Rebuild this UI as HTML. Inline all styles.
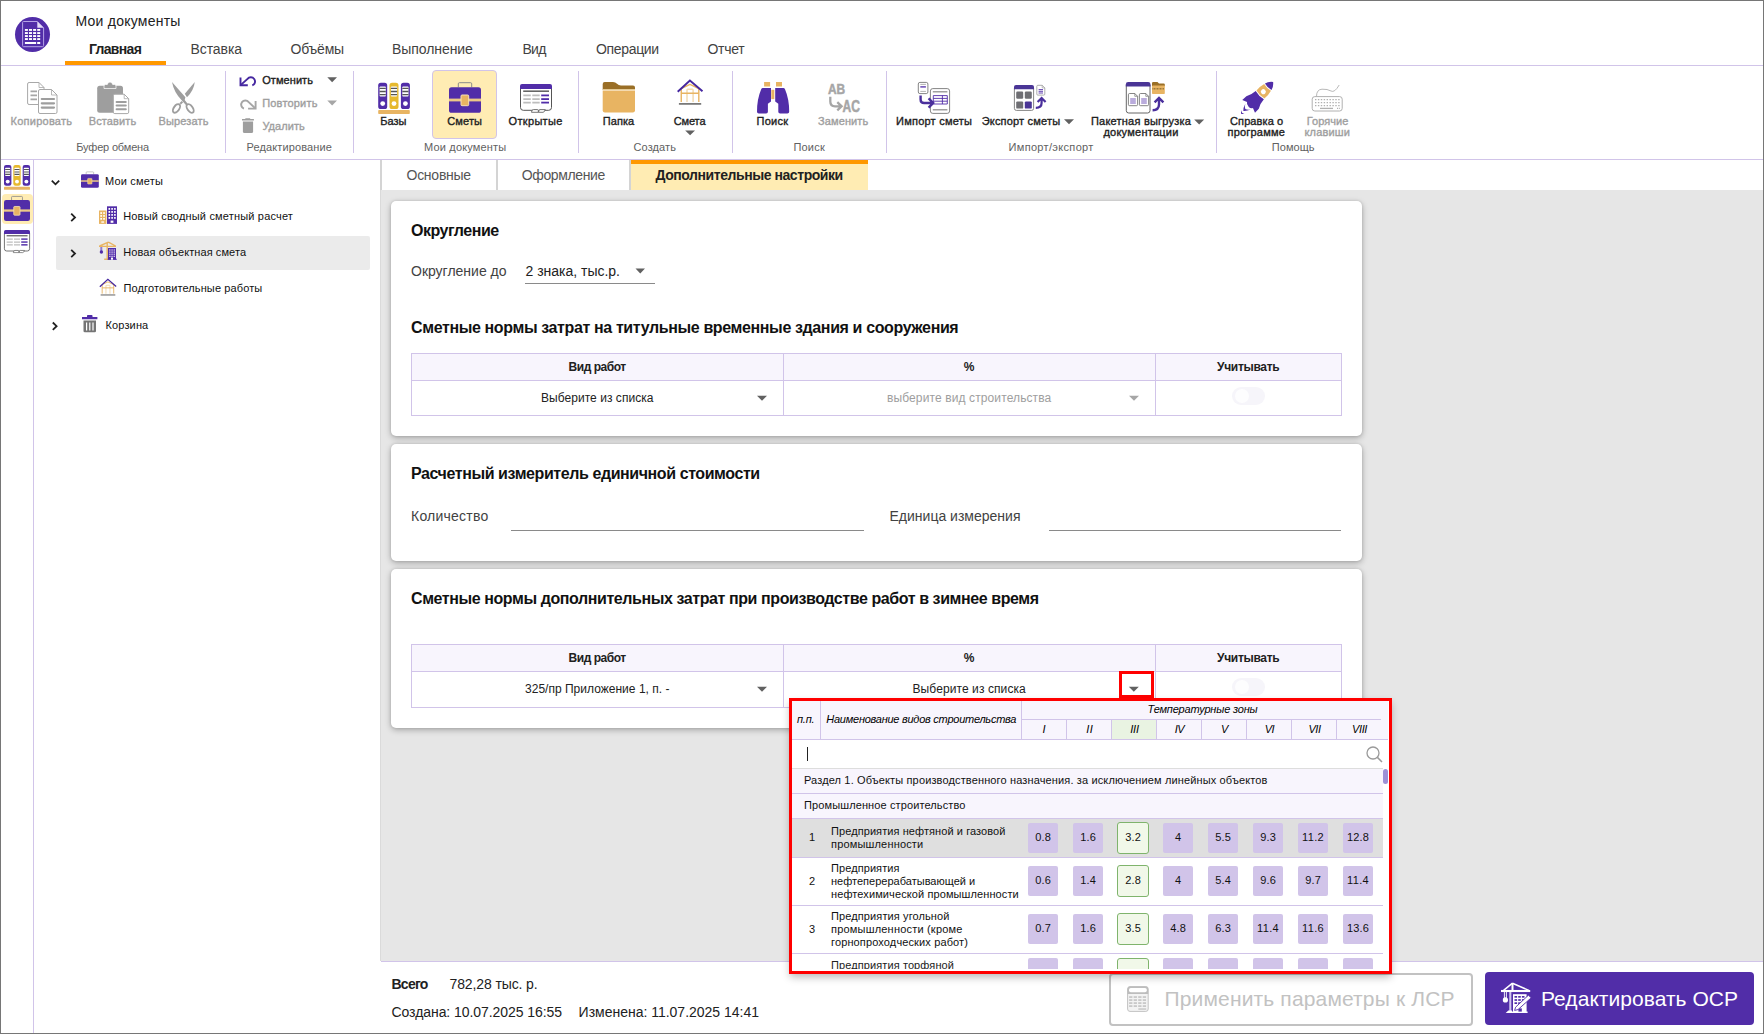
<!DOCTYPE html><html lang="ru"><head><meta charset="utf-8"><title>Мои документы</title><style>
html,body{margin:0;padding:0;background:#fff;}body{width:1764px;height:1034px;position:relative;overflow:hidden;font-family:'Liberation Sans', sans-serif;}
.t{position:absolute;white-space:nowrap;font-family:'Liberation Sans', sans-serif;}
svg{position:absolute;left:0;top:0;overflow:visible}

</style></head><body>
<div style="position:absolute;left:381px;top:190px;width:1382px;height:771px;background:#e6e6e6;"></div>
<div style="position:absolute;left:1px;top:65px;width:1762px;height:1px;background:#d1c4e9;"></div>
<div style="position:absolute;left:65px;top:61px;width:101px;height:4px;background:#ff9800;"></div>
<div style="position:absolute;left:1px;top:159px;width:1762px;height:1px;background:#d1c4e9;"></div>
<div style="position:absolute;left:225px;top:71px;width:1px;height:82px;background:#d1c4e9;"></div>
<div style="position:absolute;left:353px;top:71px;width:1px;height:82px;background:#d1c4e9;"></div>
<div style="position:absolute;left:578px;top:71px;width:1px;height:82px;background:#d1c4e9;"></div>
<div style="position:absolute;left:732px;top:71px;width:1px;height:82px;background:#d1c4e9;"></div>
<div style="position:absolute;left:886px;top:71px;width:1px;height:82px;background:#d1c4e9;"></div>
<div style="position:absolute;left:1216px;top:71px;width:1px;height:82px;background:#d1c4e9;"></div>
<div style="position:absolute;left:33px;top:160px;width:1px;height:873px;background:#d1c4e9;"></div>
<div style="position:absolute;left:432px;top:70px;width:63px;height:67px;background:#ffecb3;border:1px solid #d1c4e9;border-radius:4px;"></div>
<div style="position:absolute;left:2px;top:194px;width:31px;height:30px;background:#ffecb3;border-radius:4px;"></div>
<div style="position:absolute;left:56px;top:236px;width:314px;height:34px;background:#ebebeb;border-radius:2px;"></div>
<div style="position:absolute;left:381px;top:160px;width:1382px;height:30px;background:#fff;"></div>
<div style="position:absolute;left:380px;top:160px;width:2px;height:30px;background:#d4d4d4;"></div>
<div style="position:absolute;left:380px;top:190px;width:1px;height:771px;background:#dadada;"></div>
<div style="position:absolute;left:496px;top:160px;width:2px;height:30px;background:#d4d4d4;"></div>
<div style="position:absolute;left:629px;top:160px;width:2px;height:30px;background:#d4d4d4;"></div>
<div style="position:absolute;left:631px;top:160px;width:237px;height:30px;background:#ffecb3;"></div>
<div style="position:absolute;left:631px;top:160px;width:237px;height:4px;background:#ff9800;"></div>
<div style="position:absolute;left:391px;top:201px;width:971px;height:235px;background:#fff;border-radius:5px;box-shadow:0 2px 6px rgba(0,0,0,.28),0 0 3px rgba(0,0,0,.12);"></div>
<div style="position:absolute;left:391px;top:444px;width:971px;height:117px;background:#fff;border-radius:5px;box-shadow:0 2px 6px rgba(0,0,0,.28),0 0 3px rgba(0,0,0,.12);"></div>
<div style="position:absolute;left:391px;top:569px;width:971px;height:159px;background:#fff;border-radius:5px;box-shadow:0 2px 6px rgba(0,0,0,.28),0 0 3px rgba(0,0,0,.12);"></div>
<div style="position:absolute;left:381px;top:961px;width:1382px;height:72px;background:#fff;border-top:1px solid #d1c4e9;"></div>
<div style="position:absolute;left:525px;top:283px;width:130px;height:1px;background:#8a8a8a;"></div>
<div style="position:absolute;left:411px;top:353px;width:931px;height:63px;border:1px solid #d1c4e9;box-sizing:border-box;background:#fff;"></div>
<div style="position:absolute;left:412px;top:354px;width:929px;height:26px;background:#f8f5fd;"></div>
<div style="position:absolute;left:412px;top:380px;width:929px;height:1px;background:#d1c4e9;"></div>
<div style="position:absolute;left:783px;top:354px;width:1px;height:61px;background:#d1c4e9;"></div>
<div style="position:absolute;left:1155px;top:354px;width:1px;height:61px;background:#d1c4e9;"></div>
<div style="position:absolute;left:1232px;top:387px;width:33px;height:18px;background:#f6f5fa;border-radius:9px;"></div>
<div style="position:absolute;left:1235px;top:389px;width:14px;height:14px;background:#fdfdfe;border-radius:7px;"></div>
<div style="position:absolute;left:511px;top:530px;width:353px;height:1px;background:#8a8a8a;"></div>
<div style="position:absolute;left:1049px;top:530px;width:292px;height:1px;background:#8a8a8a;"></div>
<div style="position:absolute;left:411px;top:644px;width:931px;height:64px;border:1px solid #d1c4e9;box-sizing:border-box;background:#fff;"></div>
<div style="position:absolute;left:412px;top:645px;width:929px;height:26px;background:#f8f5fd;"></div>
<div style="position:absolute;left:412px;top:671px;width:929px;height:1px;background:#d1c4e9;"></div>
<div style="position:absolute;left:783px;top:645px;width:1px;height:62px;background:#d1c4e9;"></div>
<div style="position:absolute;left:1155px;top:645px;width:1px;height:62px;background:#d1c4e9;"></div>
<div style="position:absolute;left:1232px;top:678px;width:33px;height:18px;background:#f6f5fa;border-radius:9px;"></div>
<div style="position:absolute;left:1235px;top:680px;width:14px;height:14px;background:#fdfdfe;border-radius:7px;"></div>
<div style="position:absolute;left:1119px;top:671px;width:29px;height:21px;border:3px solid #ff0000;"></div>
<div style="position:absolute;left:1109px;top:973px;width:360px;height:49px;border:2px solid #c2c2c2;border-radius:4px;background:#fff;"></div>
<div style="position:absolute;left:1485px;top:972px;width:269px;height:53px;background:#512da8;border-radius:4px;"></div>
<div style="position:absolute;left:789px;top:698px;width:597px;height:270px;border:3px solid #ff0000;background:#fff;box-shadow:0 4px 8px -1px rgba(0,0,0,.28);z-index:20;"></div>
<div style="position:absolute;left:792px;top:701px;width:596px;height:38px;background:#f8f5fd;z-index:20;"></div>
<div style="position:absolute;left:792px;top:739px;width:596px;height:1px;background:#d1c4e9;z-index:20;"></div>
<div style="position:absolute;left:820px;top:701px;width:1px;height:38px;background:#d1c4e9;z-index:20;"></div>
<div style="position:absolute;left:1021px;top:701px;width:1px;height:38px;background:#d1c4e9;z-index:20;"></div>
<div style="position:absolute;left:1021px;top:719px;width:360px;height:1px;background:#d1c4e9;z-index:20;"></div>
<div style="position:absolute;left:1066px;top:720px;width:1px;height:19px;background:#d1c4e9;z-index:20;"></div>
<div style="position:absolute;left:1111px;top:720px;width:1px;height:19px;background:#d1c4e9;z-index:20;"></div>
<div style="position:absolute;left:1156px;top:720px;width:1px;height:19px;background:#d1c4e9;z-index:20;"></div>
<div style="position:absolute;left:1201px;top:720px;width:1px;height:19px;background:#d1c4e9;z-index:20;"></div>
<div style="position:absolute;left:1246px;top:720px;width:1px;height:19px;background:#d1c4e9;z-index:20;"></div>
<div style="position:absolute;left:1291px;top:720px;width:1px;height:19px;background:#d1c4e9;z-index:20;"></div>
<div style="position:absolute;left:1336px;top:720px;width:1px;height:19px;background:#d1c4e9;z-index:20;"></div>
<div style="position:absolute;left:1112px;top:720px;width:44px;height:19px;background:#e9f3e2;z-index:20;"></div>
<div style="position:absolute;left:807px;top:747px;width:1px;height:14px;background:#222;z-index:20;"></div>
<div style="position:absolute;left:792px;top:768px;width:591px;height:1px;background:#ddd;z-index:20;"></div>
<div style="position:absolute;left:792px;top:769px;width:591px;height:24px;background:#f8f5fd;z-index:20;"></div>
<div style="position:absolute;left:792px;top:793px;width:591px;height:1px;background:#d1c4e9;z-index:20;"></div>
<div style="position:absolute;left:792px;top:794px;width:591px;height:24px;background:#f8f5fd;z-index:20;"></div>
<div style="position:absolute;left:792px;top:818px;width:591px;height:1px;background:#d1c4e9;z-index:20;"></div>
<div style="position:absolute;left:1383px;top:769px;width:5px;height:15px;background:#9d90d6;border-radius:2.5px;z-index:20;"></div>
<div style="position:absolute;left:792px;top:819px;width:591px;height:38px;background:#dfdfdf;z-index:20;"></div>
<div style="position:absolute;left:792px;top:857px;width:591px;height:1px;background:#d1c4e9;z-index:20;"></div>
<div style="position:absolute;left:792px;top:905px;width:591px;height:1px;background:#d1c4e9;z-index:20;"></div>
<div style="position:absolute;left:792px;top:953px;width:591px;height:1px;background:#d1c4e9;z-index:20;"></div>
<div style="position:absolute;left:1028.0px;top:823px;width:30px;height:30px;background:#d1c4e9;border-radius:2px;z-index:20;"></div>
<div style="position:absolute;left:1073.0px;top:823px;width:30px;height:30px;background:#d1c4e9;border-radius:2px;z-index:20;"></div>
<div style="position:absolute;left:1117.0px;top:822px;width:30px;height:30px;background:#f1f8e9;border:1px solid #7fb46c;border-radius:3px;z-index:20;"></div>
<div style="position:absolute;left:1163.0px;top:823px;width:30px;height:30px;background:#d1c4e9;border-radius:2px;z-index:20;"></div>
<div style="position:absolute;left:1208.0px;top:823px;width:30px;height:30px;background:#d1c4e9;border-radius:2px;z-index:20;"></div>
<div style="position:absolute;left:1253.0px;top:823px;width:30px;height:30px;background:#d1c4e9;border-radius:2px;z-index:20;"></div>
<div style="position:absolute;left:1298.0px;top:823px;width:30px;height:30px;background:#d1c4e9;border-radius:2px;z-index:20;"></div>
<div style="position:absolute;left:1343.0px;top:823px;width:30px;height:30px;background:#d1c4e9;border-radius:2px;z-index:20;"></div>
<div style="position:absolute;left:1028.0px;top:866px;width:30px;height:30px;background:#d1c4e9;border-radius:2px;z-index:20;"></div>
<div style="position:absolute;left:1073.0px;top:866px;width:30px;height:30px;background:#d1c4e9;border-radius:2px;z-index:20;"></div>
<div style="position:absolute;left:1117.0px;top:865px;width:30px;height:30px;background:#f1f8e9;border:1px solid #7fb46c;border-radius:3px;z-index:20;"></div>
<div style="position:absolute;left:1163.0px;top:866px;width:30px;height:30px;background:#d1c4e9;border-radius:2px;z-index:20;"></div>
<div style="position:absolute;left:1208.0px;top:866px;width:30px;height:30px;background:#d1c4e9;border-radius:2px;z-index:20;"></div>
<div style="position:absolute;left:1253.0px;top:866px;width:30px;height:30px;background:#d1c4e9;border-radius:2px;z-index:20;"></div>
<div style="position:absolute;left:1298.0px;top:866px;width:30px;height:30px;background:#d1c4e9;border-radius:2px;z-index:20;"></div>
<div style="position:absolute;left:1343.0px;top:866px;width:30px;height:30px;background:#d1c4e9;border-radius:2px;z-index:20;"></div>
<div style="position:absolute;left:1028.0px;top:914px;width:30px;height:30px;background:#d1c4e9;border-radius:2px;z-index:20;"></div>
<div style="position:absolute;left:1073.0px;top:914px;width:30px;height:30px;background:#d1c4e9;border-radius:2px;z-index:20;"></div>
<div style="position:absolute;left:1117.0px;top:913px;width:30px;height:30px;background:#f1f8e9;border:1px solid #7fb46c;border-radius:3px;z-index:20;"></div>
<div style="position:absolute;left:1163.0px;top:914px;width:30px;height:30px;background:#d1c4e9;border-radius:2px;z-index:20;"></div>
<div style="position:absolute;left:1208.0px;top:914px;width:30px;height:30px;background:#d1c4e9;border-radius:2px;z-index:20;"></div>
<div style="position:absolute;left:1253.0px;top:914px;width:30px;height:30px;background:#d1c4e9;border-radius:2px;z-index:20;"></div>
<div style="position:absolute;left:1298.0px;top:914px;width:30px;height:30px;background:#d1c4e9;border-radius:2px;z-index:20;"></div>
<div style="position:absolute;left:1343.0px;top:914px;width:30px;height:30px;background:#d1c4e9;border-radius:2px;z-index:20;"></div>
<div style="position:absolute;left:792px;top:954px;width:591px;height:15px;overflow:hidden;z-index:21;font-family:'Liberation Sans', sans-serif;font-size:11px;line-height:13px;color:#212121"><div style="position:absolute;left:17px;top:14px;">4</div><div style="position:absolute;left:39px;top:5px;white-space:nowrap;letter-spacing:0.1px">Предприятия торфяной</div><div style="position:absolute;left:236.0px;top:4px;width:30px;height:30px;line-height:30px;text-align:center;background:#d1c4e9;border-radius:2px;">0.8</div><div style="position:absolute;left:281.0px;top:4px;width:30px;height:30px;line-height:30px;text-align:center;background:#d1c4e9;border-radius:2px;">1.7</div><div style="position:absolute;left:325.0px;top:4px;width:30px;height:30px;line-height:30px;text-align:center;background:#f1f8e9;border:1px solid #7fb46c;border-radius:3px;">3.7</div><div style="position:absolute;left:371.0px;top:4px;width:30px;height:30px;line-height:30px;text-align:center;background:#d1c4e9;border-radius:2px;">5.1</div><div style="position:absolute;left:416.0px;top:4px;width:30px;height:30px;line-height:30px;text-align:center;background:#d1c4e9;border-radius:2px;">4.6</div><div style="position:absolute;left:461.0px;top:4px;width:30px;height:30px;line-height:30px;text-align:center;background:#d1c4e9;border-radius:2px;">7.1</div><div style="position:absolute;left:506.0px;top:4px;width:30px;height:30px;line-height:30px;text-align:center;background:#d1c4e9;border-radius:2px;">9.6</div><div style="position:absolute;left:551.0px;top:4px;width:30px;height:30px;line-height:30px;text-align:center;background:#d1c4e9;border-radius:2px;">9.9</div></div>
<div style="position:absolute;left:0;top:0;width:1762px;height:1032px;border:1px solid #767676;z-index:99;pointer-events:none"></div>
<svg width="1764" height="1034" viewBox="0 0 1764 1034"><circle cx="32.5" cy="34.5" r="17.5" fill="#512da8"/>
<path d="M23.5 21.5H37.3L43.6 27.8V45.5Q43.6 46.7 42.4 46.7H23.5Q22.6 46.7 22.6 45.5V22.5Q22.6 21.5 23.5 21.5Z" fill="none" stroke="#b6a4e6" stroke-width="1"/>
<path d="M37.3 21.6V27.8H43.5Z" fill="#e4dcf8"/>
<g fill="#fff"><rect x="24.9" y="29" width="3" height="1.9"/><rect x="24.9" y="32.1" width="3" height="1.9"/><rect x="24.9" y="35.1" width="3" height="1.9"/><rect x="24.9" y="38.1" width="3" height="1.9"/><rect x="29" y="29" width="3" height="1.9"/><rect x="29" y="32.1" width="3" height="1.9"/><rect x="29" y="35.1" width="3" height="1.9"/><rect x="29" y="38.1" width="3" height="1.9"/><rect x="33.1" y="29" width="3" height="1.9"/><rect x="33.1" y="32.1" width="3" height="1.9"/><rect x="33.1" y="35.1" width="3" height="1.9"/><rect x="33.1" y="38.1" width="3" height="1.9"/><rect x="37.2" y="29" width="3" height="1.9"/><rect x="37.2" y="32.1" width="3" height="1.9"/><rect x="37.2" y="35.1" width="3" height="1.9"/><rect x="37.2" y="38.1" width="3" height="1.9"/><rect x="24.9" y="42" width="11.2" height="2"/><rect x="37.2" y="42" width="3" height="2"/></g>
<path d="M29.1 82.5H39.0L44.0 87.5V103.0Q44.0 104.5 42.5 104.5H29.1Q27.6 104.5 27.6 103.0V84.0Q27.6 82.5 29.1 82.5Z" fill="#fff" stroke="#a8a8a8" stroke-width="1"/><path d="M39.0 82.5V87.5H44.0" fill="none" stroke="#a8a8a8" stroke-width="0.8"/>
<path d="M30.5 91.3H37M30.5 95.3H37M30.5 99.3H37" stroke="#a6a6a6" stroke-width="1.8"/>
<path d="M40.0 89.5H51.5L57.0 95.0V112.0Q57.0 113.5 55.5 113.5H40.0Q38.5 113.5 38.5 112.0V91.0Q38.5 89.5 40.0 89.5Z" fill="#fff" stroke="#a8a8a8" stroke-width="1"/><path d="M51.5 89.5V95.0H57.0" fill="none" stroke="#a8a8a8" stroke-width="0.8"/>
<path d="M41.8 99H54M41.8 103.3H54M41.8 107.6H54" stroke="#9e9e9e" stroke-width="2.2" stroke-linecap="round"/>
<rect x="97.2" y="85.8" width="25.8" height="27" rx="2.5" fill="#9e9e9e"/>
<path d="M104 88.5V86Q104 84.5 105.5 84.5H107.3Q107.8 82 110 82Q112.2 82 112.7 84.5H114.5Q116 84.5 116 86V88.5Z" fill="#9e9e9e" stroke="#fff" stroke-width="0.7"/>
<path d="M114.8 94.2H124.19999999999999L128.7 98.7V112.1Q128.7 113.6 127.19999999999999 113.6H114.8Q113.3 113.6 113.3 112.1V95.7Q113.3 94.2 114.8 94.2Z" fill="#fff" stroke="#a8a8a8" stroke-width="1"/><path d="M124.19999999999999 94.2V98.7H128.7" fill="none" stroke="#a8a8a8" stroke-width="0.8"/>
<path d="M116.6 102H125.8M116.6 105.6H125.8M116.6 109.2H125.8" stroke="#9e9e9e" stroke-width="2" stroke-linecap="round"/>
<path d="M172 82.1L185.4 97.2L184.7 100.1L188 104.2L186.3 105.5L181.9 100.6Q174 92.8 172 82.1Z" fill="#9e9e9e"/>
<path d="M194.8 82.1L184.8 93.8L187 97.3Q193.8 90.6 194.8 82.1Z" fill="#9e9e9e"/>
<path d="M182.4 101.6L180.3 103.8" stroke="#9e9e9e" stroke-width="2"/>
<ellipse cx="176.5" cy="108.4" rx="2.7" ry="4.9" transform="rotate(35 176.5 108.4)" fill="none" stroke="#9e9e9e" stroke-width="1.9"/>
<ellipse cx="190.1" cy="108.5" rx="2.7" ry="4.9" transform="rotate(-35 190.1 108.5)" fill="none" stroke="#9e9e9e" stroke-width="1.9"/>
<g fill="none" stroke="#4527a0" stroke-width="1.9"><path d="M240.5 77.6V85.3H247.8"/><path d="M240.9 84.9L247.5 78.9A4.2 4.2 0 1 1 252.3 85.4"/></g>
<g fill="none" stroke="#a6a6a6" stroke-width="1.9"><path d="M255.6 100.9V108.6H248.1"/><path d="M255.2 108.2L248.7 102.1A4.2 4.2 0 1 0 243.9 108.6"/></g>
<path d="M245.2 119.1V118.7Q245.2 118.2 245.7 118.2H249.8Q250.3 118.2 250.3 118.7V119.1H253.9V120.5H242V119.1Z" fill="#9e9e9e"/><path d="M242.9 121.4H253.1V131.4Q253.1 132.9 251.6 132.9H244.4Q242.9 132.9 242.9 131.4Z" fill="#9e9e9e"/>
<path d="M327.3 77.3H337L332.15 82.3Z" fill="#616161"/>
<path d="M327.3 100.4H337L332.15 105.4Z" fill="#a6a6a6"/>
<path d="M685.2 130.5H695L690.1 135.3Z" fill="#616161"/>
<path d="M1064 119.2H1074L1069.0 124.2Z" fill="#616161"/>
<path d="M1194.2 119.5H1204.2L1199.2 124.5Z" fill="#616161"/>
<path d="M635.5 268.6H645L640.25 273.6Z" fill="#616161"/>
<path d="M757 395.8H767L762.0 400.8Z" fill="#616161"/>
<path d="M1129 395.8H1139L1134.0 400.8Z" fill="#a6a6a6"/>
<path d="M757 686.8H767L762.0 691.8Z" fill="#616161"/>
<g transform="translate(378.2 82.8) scale(1 1)"><rect x="0" y="0" width="9" height="26.2" rx="2.6" fill="#512da8"/><rect x="1.4" y="3.6" width="6.2" height="10.2" rx="0.8" fill="#fff"/><path d="M1.4 5.6h6.2M1.4 8.7h6.2M1.4 11.8h6.2" stroke="#555" stroke-width="1.3"/><circle cx="4.5" cy="20.8" r="2.4" fill="#fff"/><rect x="11.3" y="0" width="9" height="26.2" rx="2.6" fill="#e6b92e"/><rect x="12.700000000000001" y="3.6" width="6.2" height="10.2" rx="0.8" fill="#fff"/><path d="M12.700000000000001 5.6h6.2M12.700000000000001 8.7h6.2M12.700000000000001 11.8h6.2" stroke="#555" stroke-width="1.3"/><circle cx="15.8" cy="20.8" r="2.4" fill="#fff"/><rect x="22.7" y="0" width="9" height="26.2" rx="2.6" fill="#512da8"/><rect x="24.099999999999998" y="3.6" width="6.2" height="10.2" rx="0.8" fill="#fff"/><path d="M24.099999999999998 5.6h6.2M24.099999999999998 8.7h6.2M24.099999999999998 11.8h6.2" stroke="#555" stroke-width="1.3"/><circle cx="27.2" cy="20.8" r="2.4" fill="#fff"/><rect x="0" y="27.3" width="31.6" height="3.9" rx="0.8" fill="#e8b462"/></g>
<g transform="translate(4 165) scale(0.8227848101265822 0.7948717948717949)"><rect x="0" y="0" width="9" height="26.2" rx="2.6" fill="#512da8"/><rect x="1.4" y="3.6" width="6.2" height="10.2" rx="0.8" fill="#fff"/><path d="M1.4 5.6h6.2M1.4 8.7h6.2M1.4 11.8h6.2" stroke="#555" stroke-width="1.3"/><circle cx="4.5" cy="20.8" r="2.4" fill="#fff"/><rect x="11.3" y="0" width="9" height="26.2" rx="2.6" fill="#e6b92e"/><rect x="12.700000000000001" y="3.6" width="6.2" height="10.2" rx="0.8" fill="#fff"/><path d="M12.700000000000001 5.6h6.2M12.700000000000001 8.7h6.2M12.700000000000001 11.8h6.2" stroke="#555" stroke-width="1.3"/><circle cx="15.8" cy="20.8" r="2.4" fill="#fff"/><rect x="22.7" y="0" width="9" height="26.2" rx="2.6" fill="#512da8"/><rect x="24.099999999999998" y="3.6" width="6.2" height="10.2" rx="0.8" fill="#fff"/><path d="M24.099999999999998 5.6h6.2M24.099999999999998 8.7h6.2M24.099999999999998 11.8h6.2" stroke="#555" stroke-width="1.3"/><circle cx="27.2" cy="20.8" r="2.4" fill="#fff"/><rect x="0" y="27.3" width="31.6" height="3.9" rx="0.8" fill="#e8b462"/></g>
<g transform="translate(449 82.2) scale(1 1)"><path d="M9.3 5V1.6Q9.3 0.5 10.4 0.5H21.6Q22.7 0.5 22.7 1.6V5" fill="none" stroke="#8a8a8a" stroke-width="1"/><rect x="0" y="5" width="32" height="25.6" rx="2.6" fill="#512da8"/><rect x="0" y="16.4" width="32" height="2.8" fill="#ecc987"/><rect x="12" y="12.8" width="7.7" height="10.7" rx="1" fill="#e8b462" stroke="#f5e0b5" stroke-width="1"/></g>
<g transform="translate(4 196) scale(0.8125 0.8169934640522876)"><path d="M9.3 5V1.6Q9.3 0.5 10.4 0.5H21.6Q22.7 0.5 22.7 1.6V5" fill="none" stroke="#8a8a8a" stroke-width="1"/><rect x="0" y="5" width="32" height="25.6" rx="2.6" fill="#512da8"/><rect x="0" y="16.4" width="32" height="2.8" fill="#ecc987"/><rect x="12" y="12.8" width="7.7" height="10.7" rx="1" fill="#e8b462" stroke="#f5e0b5" stroke-width="1"/></g>
<g transform="translate(81 171.6) scale(0.55625 0.5294117647058824)"><path d="M9.3 5V1.6Q9.3 0.5 10.4 0.5H21.6Q22.7 0.5 22.7 1.6V5" fill="none" stroke="#999" stroke-width="1"/><rect x="0" y="5" width="32" height="25.6" rx="2.6" fill="#512da8"/><rect x="0" y="16.4" width="32" height="2.8" fill="#ecc987"/><rect x="12" y="12.8" width="7.7" height="10.7" rx="1" fill="#e8b462" stroke="#f5e0b5" stroke-width="1"/></g>
<g transform="translate(520 84) scale(1 1)"><path d="M0.5 4V23.5Q0.5 26.3 3.3 26.3H28.7Q31.5 26.3 31.5 23.5V4" fill="#fff" stroke="#555" stroke-width="1"/><path d="M0 5V2Q0 0 2 0H30Q32 0 32 2V5Z" fill="#512da8"/><path d="M3.2 7.2H29" stroke="#666" stroke-width="1.6"/><path d="M3.3 11.4H10.8M12.3 11.4H19.7" stroke="#bdbdbd" stroke-width="1.7"/><path d="M21.2 11.4H29" stroke="#512da8" stroke-width="1.8"/><path d="M3.3 15.1H10.8M12.3 15.1H19.7" stroke="#bdbdbd" stroke-width="1.7"/><path d="M21.2 15.1H29" stroke="#512da8" stroke-width="1.8"/><path d="M3.3 18.6H10.8M12.3 18.6H19.7" stroke="#bdbdbd" stroke-width="1.7"/><path d="M21.2 18.6H29" stroke="#512da8" stroke-width="1.8"/><path d="M11.5 28.3Q11.5 25.6 13.5 25.6H17.6Q18.4 25.6 18.4 28.3ZM18.6 28.3Q18.6 25.6 20 25.6H25.3Q24.5 28.3 23 28.3Z" fill="#fff" stroke="#666" stroke-width="0.9"/></g>
<g transform="translate(4 230) scale(0.8125 0.798611111111111)"><path d="M0.5 4V23.5Q0.5 26.3 3.3 26.3H28.7Q31.5 26.3 31.5 23.5V4" fill="#fff" stroke="#555" stroke-width="1"/><path d="M0 5V2Q0 0 2 0H30Q32 0 32 2V5Z" fill="#512da8"/><path d="M3.2 7.2H29" stroke="#666" stroke-width="1.6"/><path d="M3.3 11.4H10.8M12.3 11.4H19.7" stroke="#bdbdbd" stroke-width="1.7"/><path d="M21.2 11.4H29" stroke="#512da8" stroke-width="1.8"/><path d="M3.3 15.1H10.8M12.3 15.1H19.7" stroke="#bdbdbd" stroke-width="1.7"/><path d="M21.2 15.1H29" stroke="#512da8" stroke-width="1.8"/><path d="M3.3 18.6H10.8M12.3 18.6H19.7" stroke="#bdbdbd" stroke-width="1.7"/><path d="M21.2 18.6H29" stroke="#512da8" stroke-width="1.8"/><path d="M11.5 28.3Q11.5 25.6 13.5 25.6H17.6Q18.4 25.6 18.4 28.3ZM18.6 28.3Q18.6 25.6 20 25.6H25.3Q24.5 28.3 23 28.3Z" fill="#fff" stroke="#666" stroke-width="0.9"/></g>
<path d="M602.7 90V84Q602.7 82 604.7 82H613Q615.5 82 617 83.7T621 85.4H633Q635 85.4 635 87.4V90Z" fill="#9a6f26"/>
<path d="M602.7 90.4H635V110.2Q635 112.4 632.8 112.4H604.9Q602.7 112.4 602.7 110.2Z" fill="#e8b462"/>
<path d="M602.7 89.7H635" stroke="#f6dfae" stroke-width="1"/>
<g transform="translate(677.2 79) scale(1 1)"><path d="M9.8 10.3V22.9M15.9 10.3V22.9M10 10.3H15.7" fill="none" stroke="#f3dbb2" stroke-width="1.5"/><path d="M4.05 22.9V9.5L12.8 5.4L21.6 9.5V22.9M3.9 14.3H21.7" fill="none" stroke="#e8b462" stroke-width="1.4" stroke-linejoin="round"/><path d="M1.7 24.9H24" stroke="#6a6a6a" stroke-width="1.6"/><path d="M0.5 12.7L12.7 1.5L25.3 12.2" fill="none" stroke="#4527a0" stroke-width="1.9"/></g>
<g transform="translate(99.5 278.3) scale(0.6589147286821705 0.6692307692307692)"><path d="M9.8 10.3V22.9M15.9 10.3V22.9M10 10.3H15.7" fill="none" stroke="#f3dbb2" stroke-width="1.5"/><path d="M4.05 22.9V9.5L12.8 5.4L21.6 9.5V22.9M3.9 14.3H21.7" fill="none" stroke="#e8b462" stroke-width="1.4" stroke-linejoin="round"/><path d="M1.7 24.9H24" stroke="#6a6a6a" stroke-width="1.6"/><path d="M0.5 12.7L12.7 1.5L25.3 12.2" fill="none" stroke="#4527a0" stroke-width="1.9"/></g>
<rect x="764.1" y="82" width="6" height="4.5" fill="#e8b462"/><rect x="776" y="82" width="6" height="4.5" fill="#e8b462"/><rect x="771.3" y="89.8" width="3" height="9.3" fill="#e8b462"/>
<path d="M762.8 88H771V101.5L767.9 103.8V111.8Q767.9 113.6 766.1 113.6H758.8Q757 113.6 757 111.8Q757 99 761.2 89.3Q761.7 88 762.8 88Z" fill="#512da8"/>
<path d="M783.4 88H775.2V101.5L778.3 103.8V111.8Q778.3 113.6 780.1 113.6H787.4Q789.2 113.6 789.2 111.8Q789.2 99 785 89.3Q784.5 88 783.4 88Z" fill="#512da8"/>
<text x="828" y="94.2" font-family="Liberation Sans, sans-serif" font-weight="bold" font-size="14.6" fill="#a6a6a6" stroke="#a6a6a6" stroke-width="0.5" textLength="17.2" lengthAdjust="spacingAndGlyphs">AB</text>
<text x="842.6" y="111.6" font-family="Liberation Sans, sans-serif" font-weight="bold" font-size="15.8" fill="#a6a6a6" stroke="#a6a6a6" stroke-width="0.5" textLength="17.4" lengthAdjust="spacingAndGlyphs">AC</text>
<path d="M830.3 96.8V101.5Q830.3 106.3 835 106.3H841M837.3 102.2L841.6 106.3L837.3 110.4" fill="none" stroke="#a6a6a6" stroke-width="2.3"/>
<rect x="918.3" y="82.4" width="9.6" height="11.2" rx="1.6" fill="#fff" stroke="#777" stroke-width="0.9"/>
<path d="M920.3 84.4H925.9M920.3 91.4H925.9" stroke="#aaa" stroke-width="0.9"/><path d="M920.3 86.9H925.9" stroke="#512da8" stroke-width="1.3"/>
<rect x="930.4" y="88.6" width="19.2" height="24.8" rx="2.4" fill="#fff" stroke="#777" stroke-width="0.9"/>
<path d="M932.8 91.8H947.4M932.8 109.8H947.4" stroke="#a0a0a0" stroke-width="1.4"/>
<path d="M933.3 95.6H947.3V104H933.3ZM933.3 98.4H947.3M933.3 101.2H947.3M942.4 95.6V104" fill="#fff" stroke="#512da8" stroke-width="0.9"/>
<path d="M920.6 95.5V99.5Q920.6 103 924.1 103H932.5M928.6 98.4L933.2 103L928.6 107.6" fill="none" stroke="#4a2f9c" stroke-width="2.4"/>
<path d="M1014.4 88V108.4Q1014.4 110.4 1016.4 110.4H1031.6Q1033.6 110.4 1033.6 108.4V88Z" fill="#fff" stroke="#777" stroke-width="0.9"/>
<path d="M1014 89.3V87Q1014 85 1016 85H1032Q1034 85 1034 87V89.3Z" fill="#4a3596"/>
<rect x="1016.2" y="91.6" width="7" height="7.2" rx="1.2" fill="#6e6e73"/>
<rect x="1024.8" y="91.6" width="7" height="7.2" rx="1.2" fill="#6e6e73"/>
<rect x="1016.2" y="101.4" width="7" height="7.2" rx="1.2" fill="#6e6e73"/>
<rect x="1024.8" y="101.4" width="7" height="7.2" rx="1.2" fill="#4a3596"/>
<path d="M1037.8 85.3H1042.2L1044.8 87.89999999999999V94.1Q1044.8 95.1 1043.8 95.1H1037.8Q1036.8 95.1 1036.8 94.1V86.3Q1036.8 85.3 1037.8 85.3Z" fill="#fff" stroke="#999" stroke-width="0.8"/><path d="M1042.2 85.3V87.89999999999999H1044.8" fill="none" stroke="#999" stroke-width="0.6400000000000001"/>
<path d="M1038.6 89.6H1043M1038.6 91.3H1043M1038.6 93H1043" stroke="#512da8" stroke-width="0.9"/>
<path d="M1035.8 107.8Q1041.6 107.8 1041.6 103V98.6M1037.6 102L1041.6 98L1045.6 102" fill="none" stroke="#4a2f9c" stroke-width="2.2"/>
<path d="M1126.3 85V110.6Q1126.3 113 1128.7 113H1147.6Q1150 113 1150 110.6V85Z" fill="#fff" stroke="#555" stroke-width="0.9"/>
<path d="M1125.8 86.6V84.4Q1125.8 82 1128.2 82H1148.1Q1150.5 82 1150.5 84.4V86.6Z" fill="#4a3596"/>
<path d="M1129.6000000000001 93.5H1134.8000000000002L1137.6000000000001 96.3V104.5Q1137.6000000000001 105.7 1136.4 105.7H1129.6000000000001Q1128.4 105.7 1128.4 104.5V94.7Q1128.4 93.5 1129.6000000000001 93.5Z" fill="#fff" stroke="#666" stroke-width="0.8"/><path d="M1134.8000000000002 93.5V96.3H1137.6000000000001" fill="none" stroke="#666" stroke-width="0.6400000000000001"/>
<path d="M1130.2 99h5.6M1130.2 101h5.6M1130.2 103h5.6" stroke="#512da8" stroke-width="0.8"/>
<path d="M1140.6000000000001 93.5H1145.8000000000002L1148.6000000000001 96.3V104.5Q1148.6000000000001 105.7 1147.4 105.7H1140.6000000000001Q1139.4 105.7 1139.4 104.5V94.7Q1139.4 93.5 1140.6000000000001 93.5Z" fill="#fff" stroke="#666" stroke-width="0.8"/><path d="M1145.8000000000002 93.5V96.3H1148.6000000000001" fill="none" stroke="#666" stroke-width="0.6400000000000001"/>
<path d="M1141.2 99h5.6M1141.2 101h5.6M1141.2 103h5.6" stroke="#512da8" stroke-width="0.8"/>
<path d="M1152 83.2Q1152 82 1153.2 82H1157.5L1159 83.6H1163.8Q1164.8 83.6 1164.8 84.6V86H1152Z" fill="#9a6f26"/><rect x="1152" y="85.4" width="12.8" height="8.6" rx="0.8" fill="#e8b462"/><path d="M1152.6 88.7H1164.4" stroke="#8a6a30" stroke-width="1.4" stroke-dasharray="0.8 0.7"/>
<path d="M1152.6 110.2Q1159 110.2 1159 104.6V98.4M1154.6 102.4L1159 98L1163.4 102.4" fill="none" stroke="#4a2f9c" stroke-width="2.4"/>
<g transform="translate(1273.1 81.9) rotate(45)"><path d="M0 0Q3.8 3 4.6 6.9Q0 8.3 -4.6 6.9Q-3.8 3 0 0Z" fill="#512da8"/><path d="M-4.8 7.8Q0 9.2 4.8 7.8Q6.3 13 5.6 17.9Q0 19.4 -5.6 17.9Q-6.3 13 -4.8 7.8Z" fill="#e8b462"/><circle cx="0" cy="13.8" r="2.5" fill="#fff"/><path d="M-5.8 18.8Q0 20.4 5.8 18.8Q6.2 25 8.8 29L9 34.6L4.2 32.7Q3 34.9 0.5 34.9Q-3 34.9 -4.2 32.7L-9 34.6L-8.8 29Q-6.2 25 -5.8 18.8Z" fill="#512da8"/><path d="M-4 35.4Q-2.8 39.6 -0.5 41.6Q2 39.6 3.8 35.4Q1.5 38.3 -0.4 38.9Q-2.3 38.1 -4 35.4Z" fill="#512da8"/><path d="M-2.4 42.2Q-1.4 44.5 -0.2 45.1Q1.2 44.5 2.2 42.6Q0.8 43.7 -0.2 43.7Q-1.4 43.5 -2.4 42.2Z" fill="#512da8"/></g>
<rect x="1312.2" y="96.6" width="30" height="14.4" rx="2.6" fill="#fff" stroke="#b0b0b0" stroke-width="1"/>
<path d="M1315 99.6H1340M1315 102.6H1340M1315 105.6H1340" stroke="#b0b0b0" stroke-width="1.4" stroke-dasharray="1.4 1.5"/><path d="M1320 108.4H1333" stroke="#b0b0b0" stroke-width="1.3"/><path d="M1337 108.4H1340" stroke="#b0b0b0" stroke-width="1.3" stroke-dasharray="1.2 1"/>
<path d="M1316.5 96.4Q1316.5 89.5 1322 89.2T1331 91T1339.2 85" fill="none" stroke="#b0b0b0" stroke-width="0.9"/>
<path d="M51.8 180.6L55.5 184.3L59.2 180.6" fill="none" stroke="#212121" stroke-width="1.8"/>
<path d="M71.2 213.70000000000002L75.0 217.4L71.2 221.1" fill="none" stroke="#212121" stroke-width="1.8"/>
<path d="M71.2 249.8L75.0 253.5L71.2 257.2" fill="none" stroke="#212121" stroke-width="1.8"/>
<path d="M52.8 322.5L56.599999999999994 326.2L52.8 329.9" fill="none" stroke="#212121" stroke-width="1.8"/>
<rect x="99" y="210.5" width="7.4" height="13.4" fill="#e8b462"/><rect x="100.30" y="212.20" width="1.7" height="1.7" fill="#fff"/><rect x="100.30" y="215.10" width="1.7" height="1.7" fill="#fff"/><rect x="100.30" y="218.00" width="1.7" height="1.7" fill="#fff"/><rect x="103.20" y="212.20" width="1.7" height="1.7" fill="#fff"/><rect x="103.20" y="215.10" width="1.7" height="1.7" fill="#fff"/><rect x="103.20" y="218.00" width="1.7" height="1.7" fill="#fff"/><rect x="101.3" y="221.4" width="2.8" height="1.3" fill="#fff"/>
<rect x="107" y="206.3" width="10" height="17.6" fill="#512da8"/><rect x="108.50" y="208.00" width="1.6" height="1.8" fill="#fff"/><rect x="108.50" y="211.00" width="1.6" height="1.8" fill="#fff"/><rect x="108.50" y="214.00" width="1.6" height="1.8" fill="#fff"/><rect x="108.50" y="217.00" width="1.6" height="1.8" fill="#fff"/><rect x="111.30" y="208.00" width="1.6" height="1.8" fill="#fff"/><rect x="111.30" y="211.00" width="1.6" height="1.8" fill="#fff"/><rect x="111.30" y="214.00" width="1.6" height="1.8" fill="#fff"/><rect x="111.30" y="217.00" width="1.6" height="1.8" fill="#fff"/><rect x="114.10" y="208.00" width="1.6" height="1.8" fill="#fff"/><rect x="114.10" y="211.00" width="1.6" height="1.8" fill="#fff"/><rect x="114.10" y="214.00" width="1.6" height="1.8" fill="#fff"/><rect x="114.10" y="217.00" width="1.6" height="1.8" fill="#fff"/><rect x="110.6" y="220.6" width="2.8" height="2.2" fill="#fff"/>
<path d="M107.2 242.2V259.6M99 246.4H116M108.4 242.1L99.6 246M108.4 242.1L115.6 246M104.2 259.2H108.4" fill="none" stroke="#e8b462" stroke-width="1.4"/>
<path d="M101.3 247V251" stroke="#8e7bd0" stroke-width="2"/><circle cx="101.4" cy="252" r="1.7" fill="#512da8"/>
<rect x="108" y="248" width="8" height="11.7" fill="#512da8"/><rect x="107.6" y="258.8" width="9.3" height="0.9" fill="#512da8"/><rect x="109.20" y="249.40" width="1.3" height="1.2" fill="#e6dcfa"/><rect x="109.20" y="251.50" width="1.3" height="1.2" fill="#e6dcfa"/><rect x="109.20" y="253.60" width="1.3" height="1.2" fill="#e6dcfa"/><rect x="109.20" y="255.70" width="1.3" height="1.2" fill="#e6dcfa"/><rect x="111.40" y="249.40" width="1.3" height="1.2" fill="#e6dcfa"/><rect x="111.40" y="251.50" width="1.3" height="1.2" fill="#e6dcfa"/><rect x="111.40" y="253.60" width="1.3" height="1.2" fill="#e6dcfa"/><rect x="111.40" y="255.70" width="1.3" height="1.2" fill="#e6dcfa"/><rect x="113.60" y="249.40" width="1.3" height="1.2" fill="#e6dcfa"/><rect x="113.60" y="251.50" width="1.3" height="1.2" fill="#e6dcfa"/><rect x="113.60" y="253.60" width="1.3" height="1.2" fill="#e6dcfa"/><rect x="113.60" y="255.70" width="1.3" height="1.2" fill="#e6dcfa"/><rect x="111" y="257.6" width="2" height="2.1" fill="#fff"/>
<path d="M87 317V315.8Q87 315 87.8 315H91.7Q92.5 315 92.5 315.8V317H97.4V319.3H82V317Z" fill="#512da8"/>
<path d="M83.5 320.5H96V331Q96 332.3 94.7 332.3H84.8Q83.5 332.3 83.5 331Z" fill="#757575"/><path d="M86.6 322.5V330.4M89.8 322.5V330.4M93 322.5V330.4" stroke="#fff" stroke-width="1.2"/>
<rect x="1127.6" y="986.6" width="20.6" height="24.8" rx="2.4" fill="#f3f3f3" stroke="#c2c2c2" stroke-width="1"/>
<path d="M1127.6 994V989Q1127.6 986.6 1130 986.6H1145.8Q1148.2 986.6 1148.2 989V994Z" fill="#bdbdbd"/><rect x="1129" y="988" width="17.8" height="4.2" rx="1.8" fill="#fff"/>
<rect x="1129.10" y="996.20" width="3.3" height="1.7" fill="#c6c6c6"/><rect x="1129.10" y="999.22" width="3.3" height="1.7" fill="#c6c6c6"/><rect x="1129.10" y="1002.24" width="3.3" height="1.7" fill="#c6c6c6"/><rect x="1129.10" y="1005.26" width="3.3" height="1.7" fill="#c6c6c6"/><rect x="1133.65" y="996.20" width="3.3" height="1.7" fill="#c6c6c6"/><rect x="1133.65" y="999.22" width="3.3" height="1.7" fill="#c6c6c6"/><rect x="1133.65" y="1002.24" width="3.3" height="1.7" fill="#c6c6c6"/><rect x="1133.65" y="1005.26" width="3.3" height="1.7" fill="#c6c6c6"/><rect x="1138.20" y="996.20" width="3.3" height="1.7" fill="#c6c6c6"/><rect x="1138.20" y="999.22" width="3.3" height="1.7" fill="#c6c6c6"/><rect x="1138.20" y="1002.24" width="3.3" height="1.7" fill="#c6c6c6"/><rect x="1138.20" y="1005.26" width="3.3" height="1.7" fill="#c6c6c6"/><rect x="1142.75" y="996.20" width="3.3" height="1.7" fill="#c6c6c6"/><rect x="1142.75" y="999.22" width="3.3" height="1.7" fill="#c6c6c6"/><rect x="1142.75" y="1002.24" width="3.3" height="1.7" fill="#c6c6c6"/><rect x="1142.75" y="1005.26" width="3.3" height="1.7" fill="#c6c6c6"/><rect x="1138.3" y="1008.2" width="7.9" height="1.7" fill="#cdcdcd"/>
<g fill="none" stroke="#fff"><path d="M1501 991H1530.2" stroke-width="2.1"/><path d="M1512.5 983.2L1503.6 990.4M1512.5 983.2L1528.8 990.4" stroke-width="1.5"/><path d="M1512.5 983V991" stroke-width="2"/><path d="M1510.3 992V1012" stroke="#cfc3ee" stroke-width="2.1"/><path d="M1504.4 992V998.5M1506.4 992V998.5" stroke-width="0.9"/></g><circle cx="1505.4" cy="999.9" r="2.6" fill="#fff"/>
<path d="M1505.7 1012.9L1508.3 1010.6H1512V1012.9ZM1511.6 1011.6H1527.6V1012.9H1511.6Z" fill="#fff"/>
<rect x="1513" y="994.2" width="13.6" height="18.5" fill="#fff"/><rect x="1514.50" y="996.00" width="2.6" height="1.7" fill="#512da8"/><rect x="1514.50" y="999.15" width="2.6" height="1.7" fill="#512da8"/><rect x="1514.50" y="1002.30" width="2.6" height="1.7" fill="#512da8"/><rect x="1518.20" y="996.00" width="2.6" height="1.7" fill="#512da8"/><rect x="1518.20" y="999.15" width="2.6" height="1.7" fill="#512da8"/><rect x="1518.20" y="1002.30" width="2.6" height="1.7" fill="#512da8"/><rect x="1521.90" y="996.00" width="2.6" height="1.7" fill="#512da8"/><rect x="1521.90" y="999.15" width="2.6" height="1.7" fill="#512da8"/><rect x="1521.90" y="1002.30" width="2.6" height="1.7" fill="#512da8"/><rect x="1518.4" y="1008.4" width="3.4" height="3.2" fill="#512da8"/>
<path d="M1528.4 995.2L1531.2 997.8L1518 1009.6L1514.6 1010.4L1515.6 1007.2Z" fill="#fff" stroke="#512da8" stroke-width="0.9"/></svg>
<div class="t" id="t0" style="left:75.5px;top:12.20px;height:18px;line-height:18px;font-size:14px;color:#212121;letter-spacing:0.239px;">Мои документы</div>
<div class="t" id="t1" style="left:89px;top:40.20px;height:18px;line-height:18px;font-size:14px;color:#212121;font-weight:bold;letter-spacing:-0.683px;">Главная</div>
<div class="t" id="t2" style="left:190.5px;top:40.20px;height:18px;line-height:18px;font-size:14px;color:#424242;letter-spacing:-0.084px;">Вставка</div>
<div class="t" id="t3" style="left:290.5px;top:40.20px;height:18px;line-height:18px;font-size:14px;color:#424242;letter-spacing:-0.213px;">Объёмы</div>
<div class="t" id="t4" style="left:392px;top:40.20px;height:18px;line-height:18px;font-size:14px;color:#424242;letter-spacing:-0.072px;">Выполнение</div>
<div class="t" id="t5" style="left:522.5px;top:40.20px;height:18px;line-height:18px;font-size:14px;color:#424242;letter-spacing:-0.731px;">Вид</div>
<div class="t" id="t6" style="left:596px;top:40.20px;height:18px;line-height:18px;font-size:14px;color:#424242;letter-spacing:-0.333px;">Операции</div>
<div class="t" id="t7" style="left:707.5px;top:40.20px;height:18px;line-height:18px;font-size:14px;color:#424242;letter-spacing:-0.299px;">Отчет</div>
<div class="t" id="t8" style="left:10.6px;top:114.00px;height:14px;line-height:14px;font-size:11px;color:#9e9e9e;-webkit-text-stroke:0.35px #9e9e9e;letter-spacing:0.238px;">Копировать</div>
<div class="t" id="t9" style="left:88.8px;top:114.00px;height:14px;line-height:14px;font-size:11px;color:#9e9e9e;-webkit-text-stroke:0.35px #9e9e9e;letter-spacing:0.101px;">Вставить</div>
<div class="t" id="t10" style="left:158.4px;top:114.00px;height:14px;line-height:14px;font-size:11px;color:#9e9e9e;-webkit-text-stroke:0.35px #9e9e9e;letter-spacing:0.155px;">Вырезать</div>
<div class="t" id="t11" style="left:380.3px;top:114.00px;height:14px;line-height:14px;font-size:11px;color:#212121;-webkit-text-stroke:0.35px #212121;letter-spacing:0.008px;">Базы</div>
<div class="t" id="t12" style="left:447.2px;top:114.00px;height:14px;line-height:14px;font-size:11px;color:#212121;-webkit-text-stroke:0.35px #212121;letter-spacing:0.155px;">Сметы</div>
<div class="t" id="t13" style="left:508.6px;top:114.00px;height:14px;line-height:14px;font-size:11px;color:#212121;-webkit-text-stroke:0.35px #212121;letter-spacing:0.320px;">Открытые</div>
<div class="t" id="t14" style="left:602.7px;top:114.00px;height:14px;line-height:14px;font-size:11px;color:#212121;-webkit-text-stroke:0.35px #212121;letter-spacing:0.099px;">Папка</div>
<div class="t" id="t15" style="left:673.7px;top:114.00px;height:14px;line-height:14px;font-size:11px;color:#212121;-webkit-text-stroke:0.35px #212121;letter-spacing:-0.110px;">Смета</div>
<div class="t" id="t16" style="left:756.6px;top:114.00px;height:14px;line-height:14px;font-size:11px;color:#212121;-webkit-text-stroke:0.35px #212121;letter-spacing:0.248px;">Поиск</div>
<div class="t" id="t17" style="left:818px;top:114.00px;height:14px;line-height:14px;font-size:11px;color:#9e9e9e;-webkit-text-stroke:0.35px #9e9e9e;letter-spacing:0.115px;">Заменить</div>
<div class="t" id="t18" style="left:896px;top:114.00px;height:14px;line-height:14px;font-size:11px;color:#212121;-webkit-text-stroke:0.35px #212121;letter-spacing:0.236px;">Импорт сметы</div>
<div class="t" id="t19" style="left:981.7px;top:114.00px;height:14px;line-height:14px;font-size:11px;color:#212121;-webkit-text-stroke:0.35px #212121;letter-spacing:0.188px;">Экспорт сметы</div>
<div class="t" id="t20" style="left:1091px;top:114.00px;height:14px;line-height:14px;font-size:11px;color:#212121;-webkit-text-stroke:0.35px #212121;letter-spacing:0.216px;">Пакетная выгрузка</div>
<div class="t" id="t21" style="left:1103.4px;top:125.20px;height:14px;line-height:14px;font-size:11px;color:#212121;-webkit-text-stroke:0.35px #212121;letter-spacing:0.249px;">документации</div>
<div class="t" id="t22" style="left:1230px;top:114.00px;height:14px;line-height:14px;font-size:11px;color:#212121;-webkit-text-stroke:0.35px #212121;letter-spacing:0.114px;">Справка о</div>
<div class="t" id="t23" style="left:1227.6px;top:125.20px;height:14px;line-height:14px;font-size:11px;color:#212121;-webkit-text-stroke:0.35px #212121;letter-spacing:0.190px;">программе</div>
<div class="t" id="t24" style="left:1306.7px;top:114.00px;height:14px;line-height:14px;font-size:11px;color:#9e9e9e;-webkit-text-stroke:0.35px #9e9e9e;letter-spacing:0.077px;">Горячие</div>
<div class="t" id="t25" style="left:1304.5px;top:125.20px;height:14px;line-height:14px;font-size:11px;color:#9e9e9e;-webkit-text-stroke:0.35px #9e9e9e;letter-spacing:0.163px;">клавиши</div>
<div class="t" id="t26" style="left:262.2px;top:72.60px;height:14px;line-height:14px;font-size:11px;color:#212121;-webkit-text-stroke:0.35px #212121;letter-spacing:0.071px;">Отменить</div>
<div class="t" id="t27" style="left:262.2px;top:96.20px;height:14px;line-height:14px;font-size:11px;color:#9e9e9e;-webkit-text-stroke:0.35px #9e9e9e;letter-spacing:0.188px;">Повторить</div>
<div class="t" id="t28" style="left:262.4px;top:118.50px;height:14px;line-height:14px;font-size:11px;color:#9e9e9e;-webkit-text-stroke:0.35px #9e9e9e;letter-spacing:0.062px;">Удалить</div>
<div class="t" id="t29" style="left:76.3px;top:140.20px;height:14px;line-height:14px;font-size:11px;color:#616161;letter-spacing:-0.178px;">Буфер обмена</div>
<div class="t" id="t30" style="left:246.5px;top:140.20px;height:14px;line-height:14px;font-size:11px;color:#616161;letter-spacing:0.126px;">Редактирование</div>
<div class="t" id="t31" style="left:424px;top:140.20px;height:14px;line-height:14px;font-size:11px;color:#616161;letter-spacing:0.172px;">Мои документы</div>
<div class="t" id="t32" style="left:633.5px;top:140.20px;height:14px;line-height:14px;font-size:11px;color:#616161;letter-spacing:0.106px;">Создать</div>
<div class="t" id="t33" style="left:793.4px;top:140.20px;height:14px;line-height:14px;font-size:11px;color:#616161;letter-spacing:0.226px;">Поиск</div>
<div class="t" id="t34" style="left:1008.5px;top:140.20px;height:14px;line-height:14px;font-size:11px;color:#616161;letter-spacing:0.329px;">Импорт/экспорт</div>
<div class="t" id="t35" style="left:1271.8px;top:140.20px;height:14px;line-height:14px;font-size:11px;color:#616161;letter-spacing:0.036px;">Помощь</div>
<div class="t" id="t36" style="left:105px;top:174.20px;height:14px;line-height:14px;font-size:11px;color:#111;letter-spacing:0.191px;">Мои сметы</div>
<div class="t" id="t37" style="left:123.2px;top:209.20px;height:14px;line-height:14px;font-size:11px;color:#111;letter-spacing:0.179px;">Новый сводный сметный расчет</div>
<div class="t" id="t38" style="left:123.3px;top:245.20px;height:14px;line-height:14px;font-size:11px;color:#111;letter-spacing:0.089px;">Новая объектная смета</div>
<div class="t" id="t39" style="left:123.5px;top:281.20px;height:14px;line-height:14px;font-size:11px;color:#111;letter-spacing:0.115px;">Подготовительные работы</div>
<div class="t" id="t40" style="left:105.5px;top:318.20px;height:14px;line-height:14px;font-size:11px;color:#111;letter-spacing:0.138px;">Корзина</div>
<div class="t" id="t41" style="left:406.5px;top:166.00px;height:18px;line-height:18px;font-size:14px;color:#555;letter-spacing:-0.258px;">Основные</div>
<div class="t" id="t42" style="left:521.8px;top:166.00px;height:18px;line-height:18px;font-size:14px;color:#555;letter-spacing:-0.390px;">Оформление</div>
<div class="t" id="t43" style="left:655.5px;top:166.00px;height:18px;line-height:18px;font-size:14px;color:#212121;font-weight:bold;letter-spacing:-0.436px;">Дополнительные настройки</div>
<div class="t" id="t44" style="left:411px;top:220.00px;height:21px;line-height:21px;font-size:16px;color:#111;font-weight:bold;letter-spacing:-0.467px;">Округление</div>
<div class="t" id="t45" style="left:411px;top:262.20px;height:18px;line-height:18px;font-size:14px;color:#424242;letter-spacing:-0.007px;">Округление до</div>
<div class="t" id="t46" style="left:525.5px;top:262.20px;height:18px;line-height:18px;font-size:14px;color:#212121;letter-spacing:-0.011px;">2 знака, тыс.р.</div>
<div class="t" id="t47" style="left:411px;top:317.20px;height:21px;line-height:21px;font-size:16px;color:#111;font-weight:bold;letter-spacing:-0.378px;">Сметные нормы затрат на титульные временные здания и сооружения</div>
<div class="t" id="t48" style="left:568.5px;top:359.40px;height:16px;line-height:16px;font-size:12px;color:#212121;font-weight:bold;letter-spacing:-0.450px;">Вид работ</div>
<div class="t" id="t49" style="left:969.2px;top:359.40px;height:16px;line-height:16px;font-size:12px;color:#212121;font-weight:bold;transform:translateX(-50%);">%</div>
<div class="t" id="t50" style="left:1217px;top:359.40px;height:16px;line-height:16px;font-size:12px;color:#212121;font-weight:bold;letter-spacing:-0.305px;">Учитывать</div>
<div class="t" id="t51" style="left:541px;top:390.20px;height:16px;line-height:16px;font-size:12px;color:#212121;letter-spacing:0.045px;">Выберите из списка</div>
<div class="t" id="t52" style="left:887px;top:390.20px;height:16px;line-height:16px;font-size:12px;color:#9e9e9e;letter-spacing:0.113px;">выберите вид строительства</div>
<div class="t" id="t53" style="left:411px;top:463.20px;height:21px;line-height:21px;font-size:16px;color:#111;font-weight:bold;letter-spacing:-0.417px;">Расчетный измеритель единичной стоимости</div>
<div class="t" id="t54" style="left:411px;top:507.40px;height:18px;line-height:18px;font-size:14px;color:#424242;letter-spacing:0.222px;">Количество</div>
<div class="t" id="t55" style="left:889.5px;top:507.40px;height:18px;line-height:18px;font-size:14px;color:#424242;letter-spacing:0.004px;">Единица измерения</div>
<div class="t" id="t56" style="left:411px;top:588.20px;height:21px;line-height:21px;font-size:16px;color:#111;font-weight:bold;letter-spacing:-0.417px;">Сметные нормы дополнительных затрат при производстве работ в зимнее время</div>
<div class="t" id="t57" style="left:568.5px;top:650.40px;height:16px;line-height:16px;font-size:12px;color:#212121;font-weight:bold;letter-spacing:-0.450px;">Вид работ</div>
<div class="t" id="t58" style="left:969.2px;top:650.40px;height:16px;line-height:16px;font-size:12px;color:#212121;font-weight:bold;transform:translateX(-50%);">%</div>
<div class="t" id="t59" style="left:1217px;top:650.40px;height:16px;line-height:16px;font-size:12px;color:#212121;font-weight:bold;letter-spacing:-0.305px;">Учитывать</div>
<div class="t" id="t60" style="left:525px;top:681.20px;height:16px;line-height:16px;font-size:12px;color:#212121;letter-spacing:0.017px;">325/пр Приложение 1, п. -</div>
<div class="t" id="t61" style="left:912.5px;top:681.20px;height:16px;line-height:16px;font-size:12px;color:#212121;letter-spacing:0.090px;">Выберите из списка</div>
<div class="t" id="t62" style="left:391.5px;top:974.70px;height:18px;line-height:18px;font-size:14px;color:#212121;font-weight:bold;letter-spacing:-0.753px;">Всего</div>
<div class="t" id="t63" style="left:449.5px;top:974.70px;height:18px;line-height:18px;font-size:14px;color:#212121;letter-spacing:-0.114px;">782,28 тыс. р.</div>
<div class="t" id="t64" style="left:391.5px;top:1002.80px;height:18px;line-height:18px;font-size:14px;color:#212121;letter-spacing:-0.066px;">Создана: 10.07.2025 16:55</div>
<div class="t" id="t65" style="left:578.6px;top:1002.80px;height:18px;line-height:18px;font-size:14px;color:#212121;letter-spacing:-0.011px;">Изменена: 11.07.2025 14:41</div>
<div class="t" id="t66" style="left:1164.5px;top:984.60px;height:27px;line-height:27px;font-size:21px;color:#c2c2c2;letter-spacing:0.152px;">Применить параметры к ЛСР</div>
<div class="t" id="t67" style="left:1541px;top:984.60px;height:27px;line-height:27px;font-size:21px;color:#fff;letter-spacing:0.036px;">Редактировать ОСР</div>
<div class="t" id="t68" style="left:797px;top:711.90px;height:14px;line-height:14px;font-size:11px;color:#000;font-style:italic;letter-spacing:-0.205px;z-index:21;">п.п.</div>
<div class="t" id="t69" style="left:826.3px;top:712.40px;height:14px;line-height:14px;font-size:11px;color:#000;font-style:italic;letter-spacing:-0.251px;z-index:21;">Наименование видов строительства</div>
<div class="t" id="t70" style="left:1147.5px;top:702.40px;height:14px;line-height:14px;font-size:11px;color:#000;font-style:italic;letter-spacing:-0.196px;z-index:21;">Температурные зоны</div>
<div class="t" id="t71" style="left:1042.6px;top:722.40px;height:14px;line-height:14px;font-size:11px;color:#000;font-style:italic;letter-spacing:0.938px;z-index:21;">I</div>
<div class="t" id="t72" style="left:1086.25px;top:722.40px;height:14px;line-height:14px;font-size:11px;color:#000;font-style:italic;letter-spacing:0.383px;z-index:21;">II</div>
<div class="t" id="t73" style="left:1130.1499999999999px;top:722.40px;height:14px;line-height:14px;font-size:11px;color:#000;font-style:italic;letter-spacing:-0.109px;z-index:21;">III</div>
<div class="t" id="t74" style="left:1174.6499999999999px;top:722.40px;height:14px;line-height:14px;font-size:11px;color:#000;font-style:italic;letter-spacing:-0.337px;z-index:21;">IV</div>
<div class="t" id="t75" style="left:1220.8999999999999px;top:722.40px;height:14px;line-height:14px;font-size:11px;color:#000;font-style:italic;letter-spacing:0.056px;z-index:21;">V</div>
<div class="t" id="t76" style="left:1264.85px;top:722.40px;height:14px;line-height:14px;font-size:11px;color:#000;font-style:italic;letter-spacing:-0.604px;z-index:21;">VI</div>
<div class="t" id="t77" style="left:1308.5px;top:722.40px;height:14px;line-height:14px;font-size:11px;color:#000;font-style:italic;letter-spacing:-0.501px;z-index:21;">VII</div>
<div class="t" id="t78" style="left:1352.0px;top:722.40px;height:14px;line-height:14px;font-size:11px;color:#000;font-style:italic;letter-spacing:-0.376px;z-index:21;">VIII</div>
<div class="t" id="t79" style="left:804px;top:773.30px;height:14px;line-height:14px;font-size:11px;color:#111;letter-spacing:0.137px;z-index:21;">Раздел 1. Объекты производственного назначения. за исключением линейных объектов</div>
<div class="t" id="t80" style="left:804px;top:798.30px;height:14px;line-height:14px;font-size:11px;color:#111;letter-spacing:0.116px;z-index:21;">Промышленное строительство</div>
<div class="t" id="t81" style="left:809px;top:829.60px;height:14px;line-height:14px;font-size:11px;color:#111;letter-spacing:-0.125px;z-index:21;">1</div>
<div class="t" id="t82" style="left:831px;top:823.70px;height:14px;line-height:14px;font-size:11px;color:#111;letter-spacing:0.082px;z-index:21;">Предприятия нефтяной и газовой</div>
<div class="t" id="t83" style="left:831px;top:836.70px;height:14px;line-height:14px;font-size:11px;color:#111;letter-spacing:0.172px;z-index:21;">промышленности</div>
<div class="t" id="t84" style="left:1035.15px;top:830.30px;height:14px;line-height:14px;font-size:11px;color:#111;letter-spacing:0.161px;z-index:21;">0.8</div>
<div class="t" id="t85" style="left:1080.15px;top:830.30px;height:14px;line-height:14px;font-size:11px;color:#111;letter-spacing:0.161px;z-index:21;">1.6</div>
<div class="t" id="t86" style="left:1125.15px;top:830.30px;height:14px;line-height:14px;font-size:11px;color:#111;letter-spacing:0.161px;z-index:21;">3.2</div>
<div class="t" id="t87" style="left:1174.95px;top:830.30px;height:14px;line-height:14px;font-size:11px;color:#111;letter-spacing:-0.025px;z-index:21;">4</div>
<div class="t" id="t88" style="left:1215.15px;top:830.30px;height:14px;line-height:14px;font-size:11px;color:#111;letter-spacing:0.161px;z-index:21;">5.5</div>
<div class="t" id="t89" style="left:1260.15px;top:830.30px;height:14px;line-height:14px;font-size:11px;color:#111;letter-spacing:0.161px;z-index:21;">9.3</div>
<div class="t" id="t90" style="left:1302.1px;top:830.30px;height:14px;line-height:14px;font-size:11px;color:#111;letter-spacing:0.345px;z-index:21;">11.2</div>
<div class="t" id="t91" style="left:1347.1px;top:830.30px;height:14px;line-height:14px;font-size:11px;color:#111;letter-spacing:0.108px;z-index:21;">12.8</div>
<div class="t" id="t92" style="left:809px;top:873.60px;height:14px;line-height:14px;font-size:11px;color:#111;letter-spacing:-0.125px;z-index:21;">2</div>
<div class="t" id="t93" style="left:831px;top:861.20px;height:14px;line-height:14px;font-size:11px;color:#111;letter-spacing:0.082px;z-index:21;">Предприятия</div>
<div class="t" id="t94" style="left:831px;top:874.20px;height:14px;line-height:14px;font-size:11px;color:#111;letter-spacing:0.012px;z-index:21;">нефтеперерабатывающей и</div>
<div class="t" id="t95" style="left:831px;top:887.20px;height:14px;line-height:14px;font-size:11px;color:#111;letter-spacing:0.104px;z-index:21;">нефтехимической промышленности</div>
<div class="t" id="t96" style="left:1035.15px;top:873.30px;height:14px;line-height:14px;font-size:11px;color:#111;letter-spacing:0.161px;z-index:21;">0.6</div>
<div class="t" id="t97" style="left:1080.15px;top:873.30px;height:14px;line-height:14px;font-size:11px;color:#111;letter-spacing:0.161px;z-index:21;">1.4</div>
<div class="t" id="t98" style="left:1125.15px;top:873.30px;height:14px;line-height:14px;font-size:11px;color:#111;letter-spacing:0.161px;z-index:21;">2.8</div>
<div class="t" id="t99" style="left:1174.95px;top:873.30px;height:14px;line-height:14px;font-size:11px;color:#111;letter-spacing:-0.025px;z-index:21;">4</div>
<div class="t" id="t100" style="left:1215.15px;top:873.30px;height:14px;line-height:14px;font-size:11px;color:#111;letter-spacing:0.161px;z-index:21;">5.4</div>
<div class="t" id="t101" style="left:1260.15px;top:873.30px;height:14px;line-height:14px;font-size:11px;color:#111;letter-spacing:0.161px;z-index:21;">9.6</div>
<div class="t" id="t102" style="left:1305.15px;top:873.30px;height:14px;line-height:14px;font-size:11px;color:#111;letter-spacing:0.161px;z-index:21;">9.7</div>
<div class="t" id="t103" style="left:1347.1px;top:873.30px;height:14px;line-height:14px;font-size:11px;color:#111;letter-spacing:0.345px;z-index:21;">11.4</div>
<div class="t" id="t104" style="left:809px;top:921.60px;height:14px;line-height:14px;font-size:11px;color:#111;letter-spacing:-0.125px;z-index:21;">3</div>
<div class="t" id="t105" style="left:831px;top:909.20px;height:14px;line-height:14px;font-size:11px;color:#111;letter-spacing:0.111px;z-index:21;">Предприятия угольной</div>
<div class="t" id="t106" style="left:831px;top:922.20px;height:14px;line-height:14px;font-size:11px;color:#111;letter-spacing:0.199px;z-index:21;">промышленности (кроме</div>
<div class="t" id="t107" style="left:831px;top:935.20px;height:14px;line-height:14px;font-size:11px;color:#111;letter-spacing:0.131px;z-index:21;">горнопроходческих работ)</div>
<div class="t" id="t108" style="left:1035.15px;top:921.30px;height:14px;line-height:14px;font-size:11px;color:#111;letter-spacing:0.161px;z-index:21;">0.7</div>
<div class="t" id="t109" style="left:1080.15px;top:921.30px;height:14px;line-height:14px;font-size:11px;color:#111;letter-spacing:0.161px;z-index:21;">1.6</div>
<div class="t" id="t110" style="left:1125.15px;top:921.30px;height:14px;line-height:14px;font-size:11px;color:#111;letter-spacing:0.161px;z-index:21;">3.5</div>
<div class="t" id="t111" style="left:1170.15px;top:921.30px;height:14px;line-height:14px;font-size:11px;color:#111;letter-spacing:0.161px;z-index:21;">4.8</div>
<div class="t" id="t112" style="left:1215.15px;top:921.30px;height:14px;line-height:14px;font-size:11px;color:#111;letter-spacing:0.161px;z-index:21;">6.3</div>
<div class="t" id="t113" style="left:1257.1px;top:921.30px;height:14px;line-height:14px;font-size:11px;color:#111;letter-spacing:0.345px;z-index:21;">11.4</div>
<div class="t" id="t114" style="left:1302.1px;top:921.30px;height:14px;line-height:14px;font-size:11px;color:#111;letter-spacing:0.345px;z-index:21;">11.6</div>
<div class="t" id="t115" style="left:1347.1px;top:921.30px;height:14px;line-height:14px;font-size:11px;color:#111;letter-spacing:0.108px;z-index:21;">13.6</div>
<svg width="1764" height="1034" viewBox="0 0 1764 1034" style="z-index:50"><path d="M1128.8 686.8H1138.8L1133.8 691.8Z" fill="#616161"/>
<circle cx="1373" cy="753" r="6" fill="none" stroke="#9a9a9a" stroke-width="1.3"/><path d="M1377.4 757.4L1382 762" stroke="#9a9a9a" stroke-width="1.5"/></svg>
</body></html>
